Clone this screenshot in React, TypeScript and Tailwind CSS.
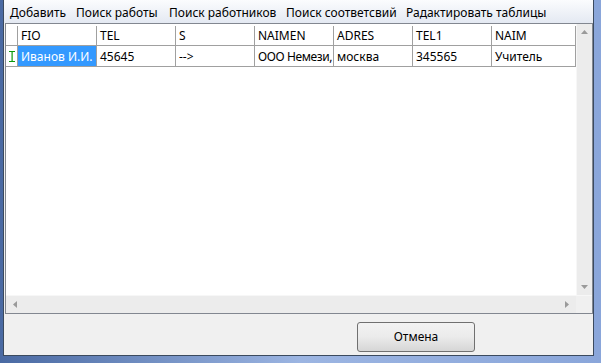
import type { ReactNode } from 'react';

const columns = [
  { name: 'FIO', value: 'Иванов И.И.', w: 'w-[79px]' },
  { name: 'TEL', value: '45645', w: 'w-[79px]' },
  { name: 'S', value: '-->', w: 'w-[79px]' },
  { name: 'NAIMEN', value: 'ООО Немези,', w: 'w-[79px] tracking-[-0.4px]' },
  { name: 'ADRES', value: 'москва', w: 'w-[79px]' },
  { name: 'TEL1', value: '345565', w: 'w-[79px]' },
  { name: 'NAIM', value: 'Учитель', w: 'w-[84px]' },
];

const menu = [
  { label: 'Добавить', w: 'w-[66px]' },
  { label: 'Поиск работы', w: 'w-[93px]' },
  { label: 'Поиск работников', w: 'w-[117px]' },
  { label: 'Поиск соответсвий', w: 'w-[120px]' },
  { label: 'Радактировать таблицы', w: 'w-[150px]' },
];

function Arrow({ dir }: { dir: 'up' | 'down' | 'left' | 'right' }) {
  const pts = {
    up: '0,4 7,4 3.5,0',
    down: '0,0 7,0 3.5,4',
    left: '4,0 4,7 0,3.5',
    right: '0,0 0,7 4,3.5',
  }[dir];
  const vertical = dir === 'up' || dir === 'down';
  return (
    <svg width={vertical ? 7 : 4} height={vertical ? 4 : 7} viewBox={vertical ? '0 0 7 4' : '0 0 4 7'}>
      <polygon points={pts} fill="#9a9a9a" />
    </svg>
  );
}

function Cell({ children, className }: { children?: ReactNode; className?: string }) {
  return (
    <div className={`shrink-0 h-full flex items-center pl-[3px] border-r border-[#a0a0a0] overflow-hidden whitespace-nowrap ${className ?? ''}`}>
      {children}
    </div>
  );
}

export default function App() {
  return (
    <div
      className="w-[601px] h-[363px] flex flex-col bg-gradient-to-r from-[#4a6aa3] via-[#9cb5e2] to-[#8aa6da] text-[12px] text-black overflow-hidden"
      style={{ fontFamily: '"Noto Sans", "Liberation Sans", sans-serif' }}
    >
      <div className="flex h-[356px] pl-[3px] pr-[7px]">
        <div className="flex-1 flex flex-col bg-[#f0f0f0] border-l border-r border-b border-[#3b4a5e]">
          {/* Menu bar */}
          <div className="h-[23px] flex items-center pl-[6px] pt-[3px] bg-gradient-to-b from-[#fbfcfe] to-[#e4e9f2]">
            {menu.map((m) => (
              <div key={m.label} className={`${m.w} shrink-0 whitespace-nowrap`}>
                {m.label}
              </div>
            ))}
          </div>

          {/* Grid */}
          <div className="ml-[1px] h-[291px] flex flex-col border border-[#828790] bg-white">
            <div className="flex-1 flex min-h-0">
              <div className="flex-1 flex flex-col">
                {/* Header */}
                <div className="h-[22px] flex border-b border-[#a0a0a0] bg-white pt-[2px]">
                  <Cell className="w-[12px]" />
                  {columns.map((c) => (
                    <Cell key={c.name} className={c.w.split(' ')[0]}>
                      {c.name}
                    </Cell>
                  ))}
                </div>
                {/* Data row */}
                <div className="h-[21px] flex border-b border-[#a0a0a0]">
                  <Cell className="w-[12px] pl-[2px] pt-[1px]">
                    <svg width="6" height="11" viewBox="0 0 6 11">
                      <rect x="0" y="0" width="6" height="1" fill="#0a9a0a" />
                      <rect x="0" y="10" width="6" height="1" fill="#0a9a0a" />
                      <rect x="2.5" y="0" width="1.2" height="11" fill="#0a9a0a" />
                    </svg>
                  </Cell>
                  {columns.map((c, i) => (
                    <Cell key={c.name} className={`${c.w} pt-[1px] ${i === 0 ? 'bg-[#3399ff] text-white' : ''}`}>
                      {c.value}
                    </Cell>
                  ))}
                </div>
              </div>
              {/* Vertical scrollbar */}
              <div className="w-[16px] flex flex-col items-center justify-between bg-[#ececec] border-l border-[#f7f7f7] py-[6px]">
                <Arrow dir="up" />
                <Arrow dir="down" />
              </div>
            </div>
            {/* Horizontal scrollbar */}
            <div className="h-[18px] flex bg-[#ececec] border-t border-[#f7f7f7]">
              <div className="flex-1 flex items-center justify-between px-[7px]">
                <Arrow dir="left" />
                <Arrow dir="right" />
              </div>
              <div className="w-[16px] bg-[#f0f0f0]" />
            </div>
          </div>

          {/* Bottom */}
          <div className="flex-1 flex justify-end pr-[118px] pt-[8px]">
            <button className="w-[118px] h-[30px] rounded-[3px] border border-[#707070] bg-gradient-to-b from-[#f2f2f2] via-[#ebebeb] to-[#d6d6d6] text-[12px]">
              Отмена
            </button>
          </div>
        </div>
      </div>
      <div className="flex-1" />
    </div>
  );
}
